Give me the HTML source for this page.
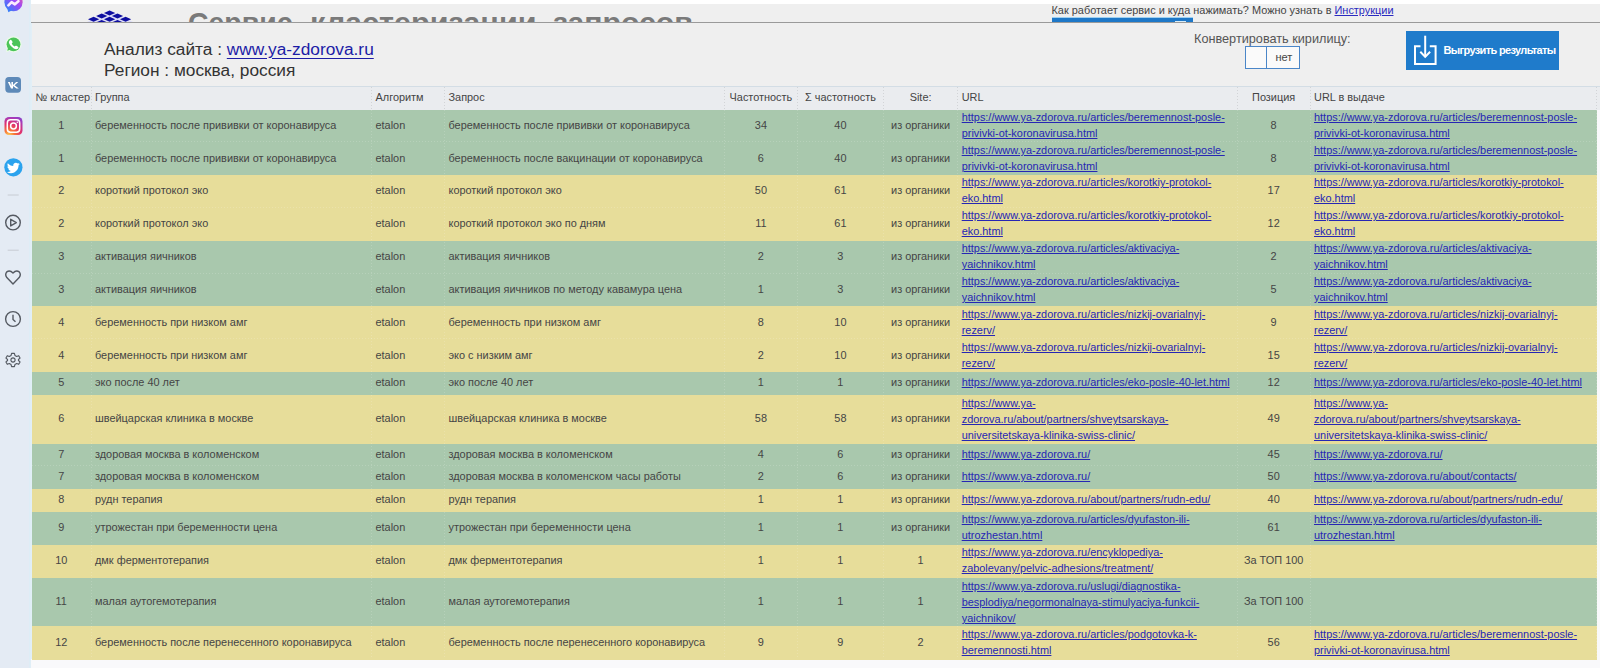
<!DOCTYPE html>
<html><head><meta charset="utf-8"><style>
html,body{margin:0;padding:0}
body{width:1600px;height:668px;overflow:hidden;position:relative;background:#efefef;font-family:"Liberation Sans",sans-serif;}
.cell{position:absolute;display:flex;align-items:flex-start;font-size:10.92px;color:#454545;box-sizing:border-box;white-space:nowrap;line-height:16px}
.cc{justify-content:center}
.cl{padding-left:4px}
.hc{color:#444}
.cell a{color:#2626b4;text-decoration:underline;}
.row{position:absolute;left:31.5px;width:1565px}
.hdr{position:absolute;left:31.5px;width:1568.5px;background:#eaecef;border-top:1px solid #d3dde5;box-sizing:border-box}
.vl{position:absolute;top:110px;height:549px;width:1px;background-image:linear-gradient(to bottom, rgba(255,255,255,0.16) 50%, transparent 50%);background-size:1px 3px}
.vlh{position:absolute;top:87px;height:22px;width:1px;background-image:linear-gradient(to bottom, rgba(0,0,0,0.1) 50%, transparent 50%);background-size:1px 3px}
.hl{position:absolute;left:31.5px;width:1565px;height:1px;background-image:linear-gradient(to right, rgba(255,255,255,0.16) 50%, transparent 50%);background-size:3px 1px}
</style></head><body>
<div style="position:absolute;left:0;top:0;width:31.5px;height:668px;background:linear-gradient(to right,#e4ebf4 0,#e4ebf4 29.5px,#deedf6 29.5px,#e2eff7 31.5px)"></div>
<svg style="position:absolute;left:0;top:0" width="31" height="400" viewBox="0 0 31 400">
  <defs>
    <linearGradient id="msg" x1="0" y1="1" x2="1" y2="0">
      <stop offset="0" stop-color="#1e8ef8"/><stop offset="0.55" stop-color="#9a48f8"/><stop offset="1" stop-color="#f25c9a"/>
    </linearGradient>
    <radialGradient id="ig" cx="0.25" cy="1.05" r="1.25"><stop offset="0" stop-color="#fdd35a"/><stop offset="0.25" stop-color="#f77737"/><stop offset="0.55" stop-color="#e1306c"/><stop offset="0.85" stop-color="#a13cc0"/><stop offset="1" stop-color="#7a44c8"/></radialGradient>
  </defs>
  <!-- messenger -->
  <circle cx="13.5" cy="2.2" r="9.1" fill="url(#msg)"/>
  <path d="M7.2 8.5 L8.4 12.3 L11.5 10.6 Z" fill="#3a7ef8"/>
  <path d="M8.4 5.3 L11.6 2.1 L14.9 4.3 L18.4 1.2" stroke="#fbeaff" stroke-width="2.6" fill="none" stroke-linejoin="round" stroke-linecap="round"/>
  <!-- whatsapp -->
  <circle cx="13.5" cy="44.3" r="8.1" fill="#eafbe8"/>
  <path d="M6 52.2 L7.2 47 L11 50.6 Z" fill="#eafbe8"/>
  <circle cx="13.5" cy="44.3" r="6.9" fill="#4cc459"/>
  <path d="M7.3 50.8 L8.2 47 L10.6 49.6 Z" fill="#4cc459"/>
  <path d="M9.6 40.4 q0.8 -1.2 1.9 -0.2 l1 1.6 q0.4 0.7 -0.3 1.3 l-0.5 0.5 q0.8 2 2.9 3 l0.5 -0.5 q0.6 -0.6 1.3 -0.3 l1.6 1 q1.1 1 0 1.8 q-1.5 1.5 -4.2 0 q-3.1 -1.9 -4.4 -4.5 q-1.2 -2.5 0.2 -3.7 z" fill="#fff"/>
  <!-- vk -->
  <rect x="5.3" y="77" width="15.7" height="15.7" rx="3.6" fill="#5d89b8"/>
  <path d="M7.9 82.1 L9.9 82.1 L11.4 86 L11.4 82.1 L13 82.1 L13 84.9 L16.1 82.1 L18.3 82.1 L14.6 85.3 L18.8 88.5 L16.4 88.5 L13 85.9 L13 88.5 L11 88.5 Z" fill="#fff"/>
  <!-- instagram -->
  <rect x="4.5" y="117" width="18" height="18" rx="4.5" fill="url(#ig)"/>
  <rect x="7.3" y="119.8" width="12.4" height="12.4" rx="3.2" fill="none" stroke="#fff" stroke-width="1.5"/>
  <circle cx="13.5" cy="126" r="2.9" fill="none" stroke="#fff" stroke-width="1.5"/>
  <circle cx="17.3" cy="122.2" r="0.8" fill="#fff"/>
  <!-- twitter -->
  <circle cx="13.4" cy="167.3" r="9.1" fill="#2ba3ee"/>
  <g transform="translate(13.4,167.6) scale(0.62) translate(-12,-12)">
  <path d="M22.46 6c-.77.35-1.6.58-2.46.69.88-.53 1.56-1.37 1.88-2.38-.83.5-1.75.85-2.72 1.05C18.37 4.5 17.26 4 16 4c-2.35 0-4.27 1.92-4.27 4.29 0 .34.04.67.11.98C8.28 9.09 5.11 7.38 3 4.79c-.37.63-.58 1.37-.58 2.15 0 1.49.75 2.81 1.91 3.56-.71 0-1.37-.2-1.95-.5v.03c0 2.08 1.48 3.82 3.44 4.21a4.22 4.22 0 0 1-1.93.07 4.28 4.28 0 0 0 4 2.98 8.521 8.521 0 0 1-5.33 1.84c-.34 0-.68-.02-1.02-.06C3.44 20.29 5.7 21 8.12 21 16 21 20.33 14.46 20.33 8.79c0-.19 0-.37-.01-.56.84-.6 1.56-1.36 2.14-2.23z" fill="#fff"/>
  </g>
  <!-- separators -->
  <line x1="7.7" y1="195" x2="18.7" y2="195" stroke="#c4c8cf" stroke-width="0.9"/>
  <line x1="7.7" y1="250.2" x2="18.7" y2="250.2" stroke="#c4c8cf" stroke-width="0.9"/>
  <!-- play -->
  <circle cx="13" cy="222.6" r="7.3" fill="none" stroke="#555a62" stroke-width="1.4"/>
  <path d="M10.7 219.3 L16.3 222.6 L10.7 225.9 Z" fill="none" stroke="#555a62" stroke-width="1.4" stroke-linejoin="round"/>
  <!-- heart -->
  <path d="M13 284 L6.8 277.6 Q4.6 274.6 6.8 271.9 Q9.8 269.6 13 273 Q16.2 269.6 19.2 271.9 Q21.4 274.6 19.2 277.6 Z" fill="none" stroke="#555a62" stroke-width="1.4" stroke-linejoin="round"/>
  <!-- clock -->
  <circle cx="13" cy="319" r="7.4" fill="none" stroke="#555a62" stroke-width="1.4"/>
  <path d="M13 314.8 L13 319.5 L15.5 321.8" fill="none" stroke="#555a62" stroke-width="1.4"/>
  <!-- gear -->
  <g transform="translate(13,360) scale(0.88)" fill="none" stroke="#555a62" stroke-width="1.3" stroke-linejoin="round">
    <path d="M-1.6 -7.6 L1.6 -7.6 L2.2 -5.2 L4.2 -4 L6.5 -4.9 L8 -2.2 L6.2 -0.6 L6.2 0.6 L8 2.2 L6.5 4.9 L4.2 4 L2.2 5.2 L1.6 7.6 L-1.6 7.6 L-2.2 5.2 L-4.2 4 L-6.5 4.9 L-8 2.2 L-6.2 0.6 L-6.2 -0.6 L-8 -2.2 L-6.5 -4.9 L-4.2 -4 L-2.2 -5.2 Z"/>
    <circle cx="0" cy="0" r="2.4"/>
  </g>
</svg>

<div style="position:absolute;left:31px;top:0;width:1569px;height:4px;background:#fff"></div>
<div style="position:absolute;left:31px;top:4px;width:1569px;height:18px;overflow:hidden;background:#efefef">
  <svg style="position:absolute;left:0;top:0" width="120" height="20" viewBox="0 0 120 20"><path d="M55.00 18.50 L78.60 6.00 L103.00 18.50 Z" fill="#dcdcf6"/><path d="M73.00 8.90 L78.60 6.40 L84.20 8.90 L78.60 11.40 Z M65.10 12.00 L70.70 9.50 L76.30 12.00 L70.70 14.50 Z M80.90 12.00 L86.50 9.50 L92.10 12.00 L86.50 14.50 Z M57.00 15.20 L62.60 12.70 L68.20 15.20 L62.60 17.70 Z M73.00 15.20 L78.60 12.70 L84.20 15.20 L78.60 17.70 Z M89.00 15.20 L94.60 12.70 L100.20 15.20 L94.60 17.70 Z M65.10 18.40 L70.70 15.90 L76.30 18.40 L70.70 20.90 Z M80.90 18.40 L86.50 15.90 L92.10 18.40 L86.50 20.90 Z" fill="#0e0ea0"/></svg>
  <div id="title" style="position:absolute;left:0;top:0;width:1569px;height:30px;font-weight:bold;font-size:29.5px;color:#7a7a7a;line-height:30px">
    <span style="position:absolute;left:157.2px;top:4px;transform:scaleX(0.964);transform-origin:0 0">Сервис</span>
    <span style="position:absolute;left:278.6px;top:4px;transform:scaleX(1.036);transform-origin:0 0">кластеризации</span>
    <span style="position:absolute;left:521.6px;top:4px;transform:scaleX(1.022);transform-origin:0 0">запросов</span>
  </div>
</div>
<div style="position:absolute;left:31px;top:22px;width:1569px;height:1px;background:#9a9a9a"></div>
<div style="position:absolute;left:1051.5px;top:3px;z-index:2;font-size:10.93px;color:#444;white-space:nowrap;line-height:14px">Как работает сервис и куда нажимать? Можно узнать в <a style="color:#2a2ac0;text-decoration:underline">Инструкции</a></div>
<div style="position:absolute;left:1051.5px;top:17px;width:141.7px;height:5px;background:#1e78c8;border-top:1px solid #9fd0f0;box-sizing:border-box"></div><div style="position:absolute;left:1174.5px;top:20.5px;width:11px;height:1.5px;background:#d8ecf8"></div>
<div style="position:absolute;left:104px;top:39px;font-size:17.3px;color:#333;white-space:nowrap;line-height:21px">Анализ сайта : <a style="color:#1c1ca6;text-decoration:underline;text-underline-offset:2.5px">www.ya-zdorova.ru</a><br>Регион : москва, россия</div>
<div style="position:absolute;left:1194px;top:32.2px;font-size:12.7px;color:#555;white-space:nowrap;line-height:15px">Конвертировать кирилицу:</div>
<div style="position:absolute;left:1245px;top:45.5px;width:54.5px;height:23.2px;border:1px solid #4a86c8;box-sizing:border-box;background:#fafafa"></div>
<div style="position:absolute;left:1266px;top:45.5px;width:1px;height:23.2px;background:#4a86c8"></div>
<div style="position:absolute;left:1275.5px;top:50px;font-size:11px;color:#444;line-height:14px">нет</div>
<div style="position:absolute;left:1406px;top:31.2px;width:153.2px;height:38.6px;background:#1f7bcb"></div>
<svg style="position:absolute;left:1406px;top:31px" width="40" height="40" viewBox="0 0 40 40">
  <path d="M14.5 15.2 L9 15.2 L9 33 L29.6 33 L29.6 15.2 L23.8 15.2" fill="none" stroke="#fff" stroke-width="2"/>
  <path d="M19.2 4.7 L19.2 26" fill="none" stroke="#fff" stroke-width="2"/>
  <path d="M14.3 20.8 L19.2 25.9 L24.1 20.8" fill="none" stroke="#fff" stroke-width="2"/>
</svg>
<div style="position:absolute;left:1443.5px;top:43px;font-size:11px;font-weight:bold;color:#fff;white-space:nowrap;line-height:14px;letter-spacing:-0.65px">Выгрузить результаты</div>

<div style="position:absolute;left:31px;top:659px;width:1569px;height:9px;background:#f9f9fb"></div><div style="position:absolute;left:1596.5px;top:109px;width:3.5px;height:559px;background:#f9f9fb"></div>
<div class="hdr" style="top:86px;height:24px"></div><div class="cell cl hc" style="left:31.50px;width:59.50px;top:89px">№ кластер</div><div class="cell cl hc" style="left:91.00px;width:280.50px;top:89px">Группа</div><div class="cell cl hc" style="left:371.50px;width:73.00px;top:89px">Алгоритм</div><div class="cell cl hc" style="left:444.50px;width:280.00px;top:89px">Запрос</div><div class="cell cc hc" style="left:724.50px;width:72.80px;top:89px">Частотность</div><div class="cell cc hc" style="left:797.30px;width:86.20px;top:89px">Σ частотность</div><div class="cell cc hc" style="left:883.50px;width:74.20px;top:89px">Site:</div><div class="cell cl hc" style="left:957.70px;width:279.60px;top:89px">URL</div><div class="cell cc hc" style="left:1237.30px;width:72.70px;top:89px">Позиция</div><div class="cell cl hc" style="left:1310.00px;width:286.50px;top:89px">URL в выдаче</div><div class="row" style="top:110px;height:32px;background:#a9c8ad"></div><div class="cell cc " style="left:31.50px;width:59.50px;top:117px">1</div><div class="cell cl " style="left:91.00px;width:280.50px;top:117px">беременность после прививки от коронавируса</div><div class="cell cl " style="left:371.50px;width:73.00px;top:117px">etalon</div><div class="cell cl " style="left:444.50px;width:280.00px;top:117px">беременность после прививки от коронавируса</div><div class="cell cc " style="left:724.50px;width:72.80px;top:117px">34</div><div class="cell cc " style="left:797.30px;width:86.20px;top:117px">40</div><div class="cell cc " style="left:883.50px;width:74.20px;top:117px">из органики</div><div class="cell cl " style="left:957.70px;width:279.60px;top:109px"><a>https://www.ya-zdorova.ru/articles/beremennost-posle-<br>privivki-ot-koronavirusa.html</a></div><div class="cell cc " style="left:1237.30px;width:72.70px;top:117px">8</div><div class="cell cl " style="left:1310.00px;width:286.50px;top:109px"><a>https://www.ya-zdorova.ru/articles/beremennost-posle-<br>privivki-ot-koronavirusa.html</a></div><div class="row" style="top:142px;height:33px;background:#a9c8ad"></div><div class="cell cc " style="left:31.50px;width:59.50px;top:150px">1</div><div class="cell cl " style="left:91.00px;width:280.50px;top:150px">беременность после прививки от коронавируса</div><div class="cell cl " style="left:371.50px;width:73.00px;top:150px">etalon</div><div class="cell cl " style="left:444.50px;width:280.00px;top:150px">беременность после вакцинации от коронавируса</div><div class="cell cc " style="left:724.50px;width:72.80px;top:150px">6</div><div class="cell cc " style="left:797.30px;width:86.20px;top:150px">40</div><div class="cell cc " style="left:883.50px;width:74.20px;top:150px">из органики</div><div class="cell cl " style="left:957.70px;width:279.60px;top:142px"><a>https://www.ya-zdorova.ru/articles/beremennost-posle-<br>privivki-ot-koronavirusa.html</a></div><div class="cell cc " style="left:1237.30px;width:72.70px;top:150px">8</div><div class="cell cl " style="left:1310.00px;width:286.50px;top:142px"><a>https://www.ya-zdorova.ru/articles/beremennost-posle-<br>privivki-ot-koronavirusa.html</a></div><div class="row" style="top:175px;height:33px;background:#e7dd9a"></div><div class="cell cc " style="left:31.50px;width:59.50px;top:182px">2</div><div class="cell cl " style="left:91.00px;width:280.50px;top:182px">короткий протокол эко</div><div class="cell cl " style="left:371.50px;width:73.00px;top:182px">etalon</div><div class="cell cl " style="left:444.50px;width:280.00px;top:182px">короткий протокол эко</div><div class="cell cc " style="left:724.50px;width:72.80px;top:182px">50</div><div class="cell cc " style="left:797.30px;width:86.20px;top:182px">61</div><div class="cell cc " style="left:883.50px;width:74.20px;top:182px">из органики</div><div class="cell cl " style="left:957.70px;width:279.60px;top:174px"><a>https://www.ya-zdorova.ru/articles/korotkiy-protokol-<br>eko.html</a></div><div class="cell cc " style="left:1237.30px;width:72.70px;top:182px">17</div><div class="cell cl " style="left:1310.00px;width:286.50px;top:174px"><a>https://www.ya-zdorova.ru/articles/korotkiy-protokol-<br>eko.html</a></div><div class="row" style="top:208px;height:33px;background:#e7dd9a"></div><div class="cell cc " style="left:31.50px;width:59.50px;top:215px">2</div><div class="cell cl " style="left:91.00px;width:280.50px;top:215px">короткий протокол эко</div><div class="cell cl " style="left:371.50px;width:73.00px;top:215px">etalon</div><div class="cell cl " style="left:444.50px;width:280.00px;top:215px">короткий протокол эко по дням</div><div class="cell cc " style="left:724.50px;width:72.80px;top:215px">11</div><div class="cell cc " style="left:797.30px;width:86.20px;top:215px">61</div><div class="cell cc " style="left:883.50px;width:74.20px;top:215px">из органики</div><div class="cell cl " style="left:957.70px;width:279.60px;top:207px"><a>https://www.ya-zdorova.ru/articles/korotkiy-protokol-<br>eko.html</a></div><div class="cell cc " style="left:1237.30px;width:72.70px;top:215px">12</div><div class="cell cl " style="left:1310.00px;width:286.50px;top:207px"><a>https://www.ya-zdorova.ru/articles/korotkiy-protokol-<br>eko.html</a></div><div class="row" style="top:241px;height:33px;background:#a9c8ad"></div><div class="cell cc " style="left:31.50px;width:59.50px;top:248px">3</div><div class="cell cl " style="left:91.00px;width:280.50px;top:248px">активация яичников</div><div class="cell cl " style="left:371.50px;width:73.00px;top:248px">etalon</div><div class="cell cl " style="left:444.50px;width:280.00px;top:248px">активация яичников</div><div class="cell cc " style="left:724.50px;width:72.80px;top:248px">2</div><div class="cell cc " style="left:797.30px;width:86.20px;top:248px">3</div><div class="cell cc " style="left:883.50px;width:74.20px;top:248px">из органики</div><div class="cell cl " style="left:957.70px;width:279.60px;top:240px"><a>https://www.ya-zdorova.ru/articles/aktivaciya-<br>yaichnikov.html</a></div><div class="cell cc " style="left:1237.30px;width:72.70px;top:248px">2</div><div class="cell cl " style="left:1310.00px;width:286.50px;top:240px"><a>https://www.ya-zdorova.ru/articles/aktivaciya-<br>yaichnikov.html</a></div><div class="row" style="top:274px;height:32px;background:#a9c8ad"></div><div class="cell cc " style="left:31.50px;width:59.50px;top:281px">3</div><div class="cell cl " style="left:91.00px;width:280.50px;top:281px">активация яичников</div><div class="cell cl " style="left:371.50px;width:73.00px;top:281px">etalon</div><div class="cell cl " style="left:444.50px;width:280.00px;top:281px">активация яичников по методу кавамура цена</div><div class="cell cc " style="left:724.50px;width:72.80px;top:281px">1</div><div class="cell cc " style="left:797.30px;width:86.20px;top:281px">3</div><div class="cell cc " style="left:883.50px;width:74.20px;top:281px">из органики</div><div class="cell cl " style="left:957.70px;width:279.60px;top:273px"><a>https://www.ya-zdorova.ru/articles/aktivaciya-<br>yaichnikov.html</a></div><div class="cell cc " style="left:1237.30px;width:72.70px;top:281px">5</div><div class="cell cl " style="left:1310.00px;width:286.50px;top:273px"><a>https://www.ya-zdorova.ru/articles/aktivaciya-<br>yaichnikov.html</a></div><div class="row" style="top:306px;height:33px;background:#e7dd9a"></div><div class="cell cc " style="left:31.50px;width:59.50px;top:314px">4</div><div class="cell cl " style="left:91.00px;width:280.50px;top:314px">беременность при низком амг</div><div class="cell cl " style="left:371.50px;width:73.00px;top:314px">etalon</div><div class="cell cl " style="left:444.50px;width:280.00px;top:314px">беременность при низком амг</div><div class="cell cc " style="left:724.50px;width:72.80px;top:314px">8</div><div class="cell cc " style="left:797.30px;width:86.20px;top:314px">10</div><div class="cell cc " style="left:883.50px;width:74.20px;top:314px">из органики</div><div class="cell cl " style="left:957.70px;width:279.60px;top:306px"><a>https://www.ya-zdorova.ru/articles/nizkij-ovarialnyj-<br>rezerv/</a></div><div class="cell cc " style="left:1237.30px;width:72.70px;top:314px">9</div><div class="cell cl " style="left:1310.00px;width:286.50px;top:306px"><a>https://www.ya-zdorova.ru/articles/nizkij-ovarialnyj-<br>rezerv/</a></div><div class="row" style="top:339px;height:33px;background:#e7dd9a"></div><div class="cell cc " style="left:31.50px;width:59.50px;top:347px">4</div><div class="cell cl " style="left:91.00px;width:280.50px;top:347px">беременность при низком амг</div><div class="cell cl " style="left:371.50px;width:73.00px;top:347px">etalon</div><div class="cell cl " style="left:444.50px;width:280.00px;top:347px">эко с низким амг</div><div class="cell cc " style="left:724.50px;width:72.80px;top:347px">2</div><div class="cell cc " style="left:797.30px;width:86.20px;top:347px">10</div><div class="cell cc " style="left:883.50px;width:74.20px;top:347px">из органики</div><div class="cell cl " style="left:957.70px;width:279.60px;top:339px"><a>https://www.ya-zdorova.ru/articles/nizkij-ovarialnyj-<br>rezerv/</a></div><div class="cell cc " style="left:1237.30px;width:72.70px;top:347px">15</div><div class="cell cl " style="left:1310.00px;width:286.50px;top:339px"><a>https://www.ya-zdorova.ru/articles/nizkij-ovarialnyj-<br>rezerv/</a></div><div class="row" style="top:372px;height:23px;background:#a9c8ad"></div><div class="cell cc " style="left:31.50px;width:59.50px;top:374px">5</div><div class="cell cl " style="left:91.00px;width:280.50px;top:374px">эко после 40 лет</div><div class="cell cl " style="left:371.50px;width:73.00px;top:374px">etalon</div><div class="cell cl " style="left:444.50px;width:280.00px;top:374px">эко после 40 лет</div><div class="cell cc " style="left:724.50px;width:72.80px;top:374px">1</div><div class="cell cc " style="left:797.30px;width:86.20px;top:374px">1</div><div class="cell cc " style="left:883.50px;width:74.20px;top:374px">из органики</div><div class="cell cl " style="left:957.70px;width:279.60px;top:374px"><a>https://www.ya-zdorova.ru/articles/eko-posle-40-let.html</a></div><div class="cell cc " style="left:1237.30px;width:72.70px;top:374px">12</div><div class="cell cl " style="left:1310.00px;width:286.50px;top:374px"><a>https://www.ya-zdorova.ru/articles/eko-posle-40-let.html</a></div><div class="row" style="top:395px;height:49px;background:#e7dd9a"></div><div class="cell cc " style="left:31.50px;width:59.50px;top:410px">6</div><div class="cell cl " style="left:91.00px;width:280.50px;top:410px">швейцарская клиника в москве</div><div class="cell cl " style="left:371.50px;width:73.00px;top:410px">etalon</div><div class="cell cl " style="left:444.50px;width:280.00px;top:410px">швейцарская клиника в москве</div><div class="cell cc " style="left:724.50px;width:72.80px;top:410px">58</div><div class="cell cc " style="left:797.30px;width:86.20px;top:410px">58</div><div class="cell cc " style="left:883.50px;width:74.20px;top:410px">из органики</div><div class="cell cl " style="left:957.70px;width:279.60px;top:395px"><a>https://www.ya-<br>zdorova.ru/about/partners/shveytsarskaya-<br>universitetskaya-klinika-swiss-clinic/</a></div><div class="cell cc " style="left:1237.30px;width:72.70px;top:410px">49</div><div class="cell cl " style="left:1310.00px;width:286.50px;top:395px"><a>https://www.ya-<br>zdorova.ru/about/partners/shveytsarskaya-<br>universitetskaya-klinika-swiss-clinic/</a></div><div class="row" style="top:444px;height:22px;background:#a9c8ad"></div><div class="cell cc " style="left:31.50px;width:59.50px;top:446px">7</div><div class="cell cl " style="left:91.00px;width:280.50px;top:446px">здоровая москва в коломенском</div><div class="cell cl " style="left:371.50px;width:73.00px;top:446px">etalon</div><div class="cell cl " style="left:444.50px;width:280.00px;top:446px">здоровая москва в коломенском</div><div class="cell cc " style="left:724.50px;width:72.80px;top:446px">4</div><div class="cell cc " style="left:797.30px;width:86.20px;top:446px">6</div><div class="cell cc " style="left:883.50px;width:74.20px;top:446px">из органики</div><div class="cell cl " style="left:957.70px;width:279.60px;top:446px"><a>https://www.ya-zdorova.ru/</a></div><div class="cell cc " style="left:1237.30px;width:72.70px;top:446px">45</div><div class="cell cl " style="left:1310.00px;width:286.50px;top:446px"><a>https://www.ya-zdorova.ru/</a></div><div class="row" style="top:466px;height:23px;background:#a9c8ad"></div><div class="cell cc " style="left:31.50px;width:59.50px;top:468px">7</div><div class="cell cl " style="left:91.00px;width:280.50px;top:468px">здоровая москва в коломенском</div><div class="cell cl " style="left:371.50px;width:73.00px;top:468px">etalon</div><div class="cell cl " style="left:444.50px;width:280.00px;top:468px">здоровая москва в коломенском часы работы</div><div class="cell cc " style="left:724.50px;width:72.80px;top:468px">2</div><div class="cell cc " style="left:797.30px;width:86.20px;top:468px">6</div><div class="cell cc " style="left:883.50px;width:74.20px;top:468px">из органики</div><div class="cell cl " style="left:957.70px;width:279.60px;top:468px"><a>https://www.ya-zdorova.ru/</a></div><div class="cell cc " style="left:1237.30px;width:72.70px;top:468px">50</div><div class="cell cl " style="left:1310.00px;width:286.50px;top:468px"><a>https://www.ya-zdorova.ru/about/contacts/</a></div><div class="row" style="top:489px;height:23px;background:#e7dd9a"></div><div class="cell cc " style="left:31.50px;width:59.50px;top:491px">8</div><div class="cell cl " style="left:91.00px;width:280.50px;top:491px">рудн терапия</div><div class="cell cl " style="left:371.50px;width:73.00px;top:491px">etalon</div><div class="cell cl " style="left:444.50px;width:280.00px;top:491px">рудн терапия</div><div class="cell cc " style="left:724.50px;width:72.80px;top:491px">1</div><div class="cell cc " style="left:797.30px;width:86.20px;top:491px">1</div><div class="cell cc " style="left:883.50px;width:74.20px;top:491px">из органики</div><div class="cell cl " style="left:957.70px;width:279.60px;top:491px"><a>https://www.ya-zdorova.ru/about/partners/rudn-edu/</a></div><div class="cell cc " style="left:1237.30px;width:72.70px;top:491px">40</div><div class="cell cl " style="left:1310.00px;width:286.50px;top:491px"><a>https://www.ya-zdorova.ru/about/partners/rudn-edu/</a></div><div class="row" style="top:512px;height:33px;background:#a9c8ad"></div><div class="cell cc " style="left:31.50px;width:59.50px;top:519px">9</div><div class="cell cl " style="left:91.00px;width:280.50px;top:519px">утрожестан при беременности цена</div><div class="cell cl " style="left:371.50px;width:73.00px;top:519px">etalon</div><div class="cell cl " style="left:444.50px;width:280.00px;top:519px">утрожестан при беременности цена</div><div class="cell cc " style="left:724.50px;width:72.80px;top:519px">1</div><div class="cell cc " style="left:797.30px;width:86.20px;top:519px">1</div><div class="cell cc " style="left:883.50px;width:74.20px;top:519px">из органики</div><div class="cell cl " style="left:957.70px;width:279.60px;top:511px"><a>https://www.ya-zdorova.ru/articles/dyufaston-ili-<br>utrozhestan.html</a></div><div class="cell cc " style="left:1237.30px;width:72.70px;top:519px">61</div><div class="cell cl " style="left:1310.00px;width:286.50px;top:511px"><a>https://www.ya-zdorova.ru/articles/dyufaston-ili-<br>utrozhestan.html</a></div><div class="row" style="top:545px;height:33px;background:#e7dd9a"></div><div class="cell cc " style="left:31.50px;width:59.50px;top:552px">10</div><div class="cell cl " style="left:91.00px;width:280.50px;top:552px">дмк ферментотерапия</div><div class="cell cl " style="left:371.50px;width:73.00px;top:552px">etalon</div><div class="cell cl " style="left:444.50px;width:280.00px;top:552px">дмк ферментотерапия</div><div class="cell cc " style="left:724.50px;width:72.80px;top:552px">1</div><div class="cell cc " style="left:797.30px;width:86.20px;top:552px">1</div><div class="cell cc " style="left:883.50px;width:74.20px;top:552px">1</div><div class="cell cl " style="left:957.70px;width:279.60px;top:544px"><a>https://www.ya-zdorova.ru/encyklopediya-<br>zabolevany/pelvic-adhesions/treatment/</a></div><div class="cell cc " style="left:1237.30px;width:72.70px;top:552px">За ТОП 100</div><div class="cell cl " style="left:1310.00px;width:286.50px;top:552px"></div><div class="row" style="top:578px;height:48px;background:#a9c8ad"></div><div class="cell cc " style="left:31.50px;width:59.50px;top:593px">11</div><div class="cell cl " style="left:91.00px;width:280.50px;top:593px">малая аутогемотерапия</div><div class="cell cl " style="left:371.50px;width:73.00px;top:593px">etalon</div><div class="cell cl " style="left:444.50px;width:280.00px;top:593px">малая аутогемотерапия</div><div class="cell cc " style="left:724.50px;width:72.80px;top:593px">1</div><div class="cell cc " style="left:797.30px;width:86.20px;top:593px">1</div><div class="cell cc " style="left:883.50px;width:74.20px;top:593px">1</div><div class="cell cl " style="left:957.70px;width:279.60px;top:578px"><a>https://www.ya-zdorova.ru/uslugi/diagnostika-<br>besplodiya/negormonalnaya-stimulyaciya-funkcii-<br>yaichnikov/</a></div><div class="cell cc " style="left:1237.30px;width:72.70px;top:593px">За ТОП 100</div><div class="cell cl " style="left:1310.00px;width:286.50px;top:593px"></div><div class="row" style="top:626px;height:34px;background:#e7dd9a"></div><div class="cell cc " style="left:31.50px;width:59.50px;top:634px">12</div><div class="cell cl " style="left:91.00px;width:280.50px;top:634px">беременность после перенесенного коронавируса</div><div class="cell cl " style="left:371.50px;width:73.00px;top:634px">etalon</div><div class="cell cl " style="left:444.50px;width:280.00px;top:634px">беременность после перенесенного коронавируса</div><div class="cell cc " style="left:724.50px;width:72.80px;top:634px">9</div><div class="cell cc " style="left:797.30px;width:86.20px;top:634px">9</div><div class="cell cc " style="left:883.50px;width:74.20px;top:634px">2</div><div class="cell cl " style="left:957.70px;width:279.60px;top:626px"><a>https://www.ya-zdorova.ru/articles/podgotovka-k-<br>beremennosti.html</a></div><div class="cell cc " style="left:1237.30px;width:72.70px;top:634px">56</div><div class="cell cl " style="left:1310.00px;width:286.50px;top:626px"><a>https://www.ya-zdorova.ru/articles/beremennost-posle-<br>privivki-ot-koronavirusa.html</a></div>
<div class="vl" style="left:90.50px"></div><div class="vlh" style="left:90.50px"></div><div class="vl" style="left:371.00px"></div><div class="vlh" style="left:371.00px"></div><div class="vl" style="left:444.00px"></div><div class="vlh" style="left:444.00px"></div><div class="vl" style="left:724.00px"></div><div class="vlh" style="left:724.00px"></div><div class="vl" style="left:796.80px"></div><div class="vlh" style="left:796.80px"></div><div class="vl" style="left:883.00px"></div><div class="vlh" style="left:883.00px"></div><div class="vl" style="left:957.20px"></div><div class="vlh" style="left:957.20px"></div><div class="vl" style="left:1236.80px"></div><div class="vlh" style="left:1236.80px"></div><div class="vl" style="left:1309.50px"></div><div class="vlh" style="left:1309.50px"></div><div class="vl" style="left:1596.00px"></div><div class="vlh" style="left:1596.00px"></div>
<div class="hl" style="top:141px"></div><div class="hl" style="top:207px"></div><div class="hl" style="top:273px"></div><div class="hl" style="top:338px"></div><div class="hl" style="top:465px"></div>
</body></html>
